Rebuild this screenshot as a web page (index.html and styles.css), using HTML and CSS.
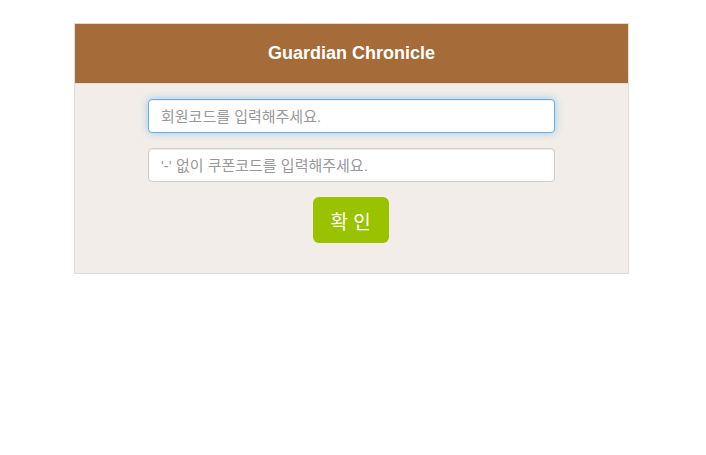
FILE: index.html
```html
<!DOCTYPE html>
<html lang="ko">
<head>
<meta charset="utf-8">
<link rel="stylesheet" href="styles.css">
</head>
<body>
<div class="box">
  <div class="head">Guardian Chronicle</div>
  <div class="body">
    <input class="field focus" type="text" placeholder="회원코드를 입력해주세요.">
    <input class="field" type="text" placeholder="'-' 없이 쿠폰코드를 입력해주세요.">
    <button class="btn" type="button">확 인</button>
  </div>
</div>
</body>
</html>
```
FILE: styles.css
```css
html, body { margin: 0; padding: 0; background: #fff; }
body { padding: 23px 0 0 74px; font-family: "Liberation Sans", "Noto Sans CJK KR", sans-serif; }
.box {
  width: 555px;
  box-sizing: border-box;
  border: 1px solid #ddd;
}
.head {
  height: 59px;
  background: #a56c3a;
  border-bottom: 1px solid #ddd;
  color: #fff;
  font-weight: bold;
  font-size: 18px;
  display: flex;
  align-items: center;
  justify-content: center;
}
.body {
  background: #f2ede8;
  padding: 15px 0 30px;
  display: flex;
  flex-direction: column;
  align-items: center;
  gap: 15px;
}
.field {
  width: 407px;
  height: 34px;
  box-sizing: border-box;
  border: 1px solid #ccc;
  border-radius: 4px;
  background: #fff;
  padding: 0 12px;
  font-size: 15px;
  font-family: "Liberation Sans", "Noto Sans CJK KR", sans-serif;
  color: #555;
  outline: none;
  box-shadow: inset 0 1px 1px rgba(0,0,0,0.075);
  margin: 0;
}
.field::placeholder { color: #999; }
.field.focus {
  border-color: #66afe9;
  box-shadow: inset 0 1px 1px rgba(0,0,0,0.075), 0 0 8px rgba(102,175,233,0.6);
}
.btn {
  width: 76px;
  height: 46px;
  border: none;
  border-radius: 6px;
  background: #99c300;
  color: #fff;
  font-size: 19px;
  font-family: "Liberation Sans", "Noto Sans CJK KR", sans-serif;
  padding: 0;
  margin: 0 2px 0 0;
}
```
